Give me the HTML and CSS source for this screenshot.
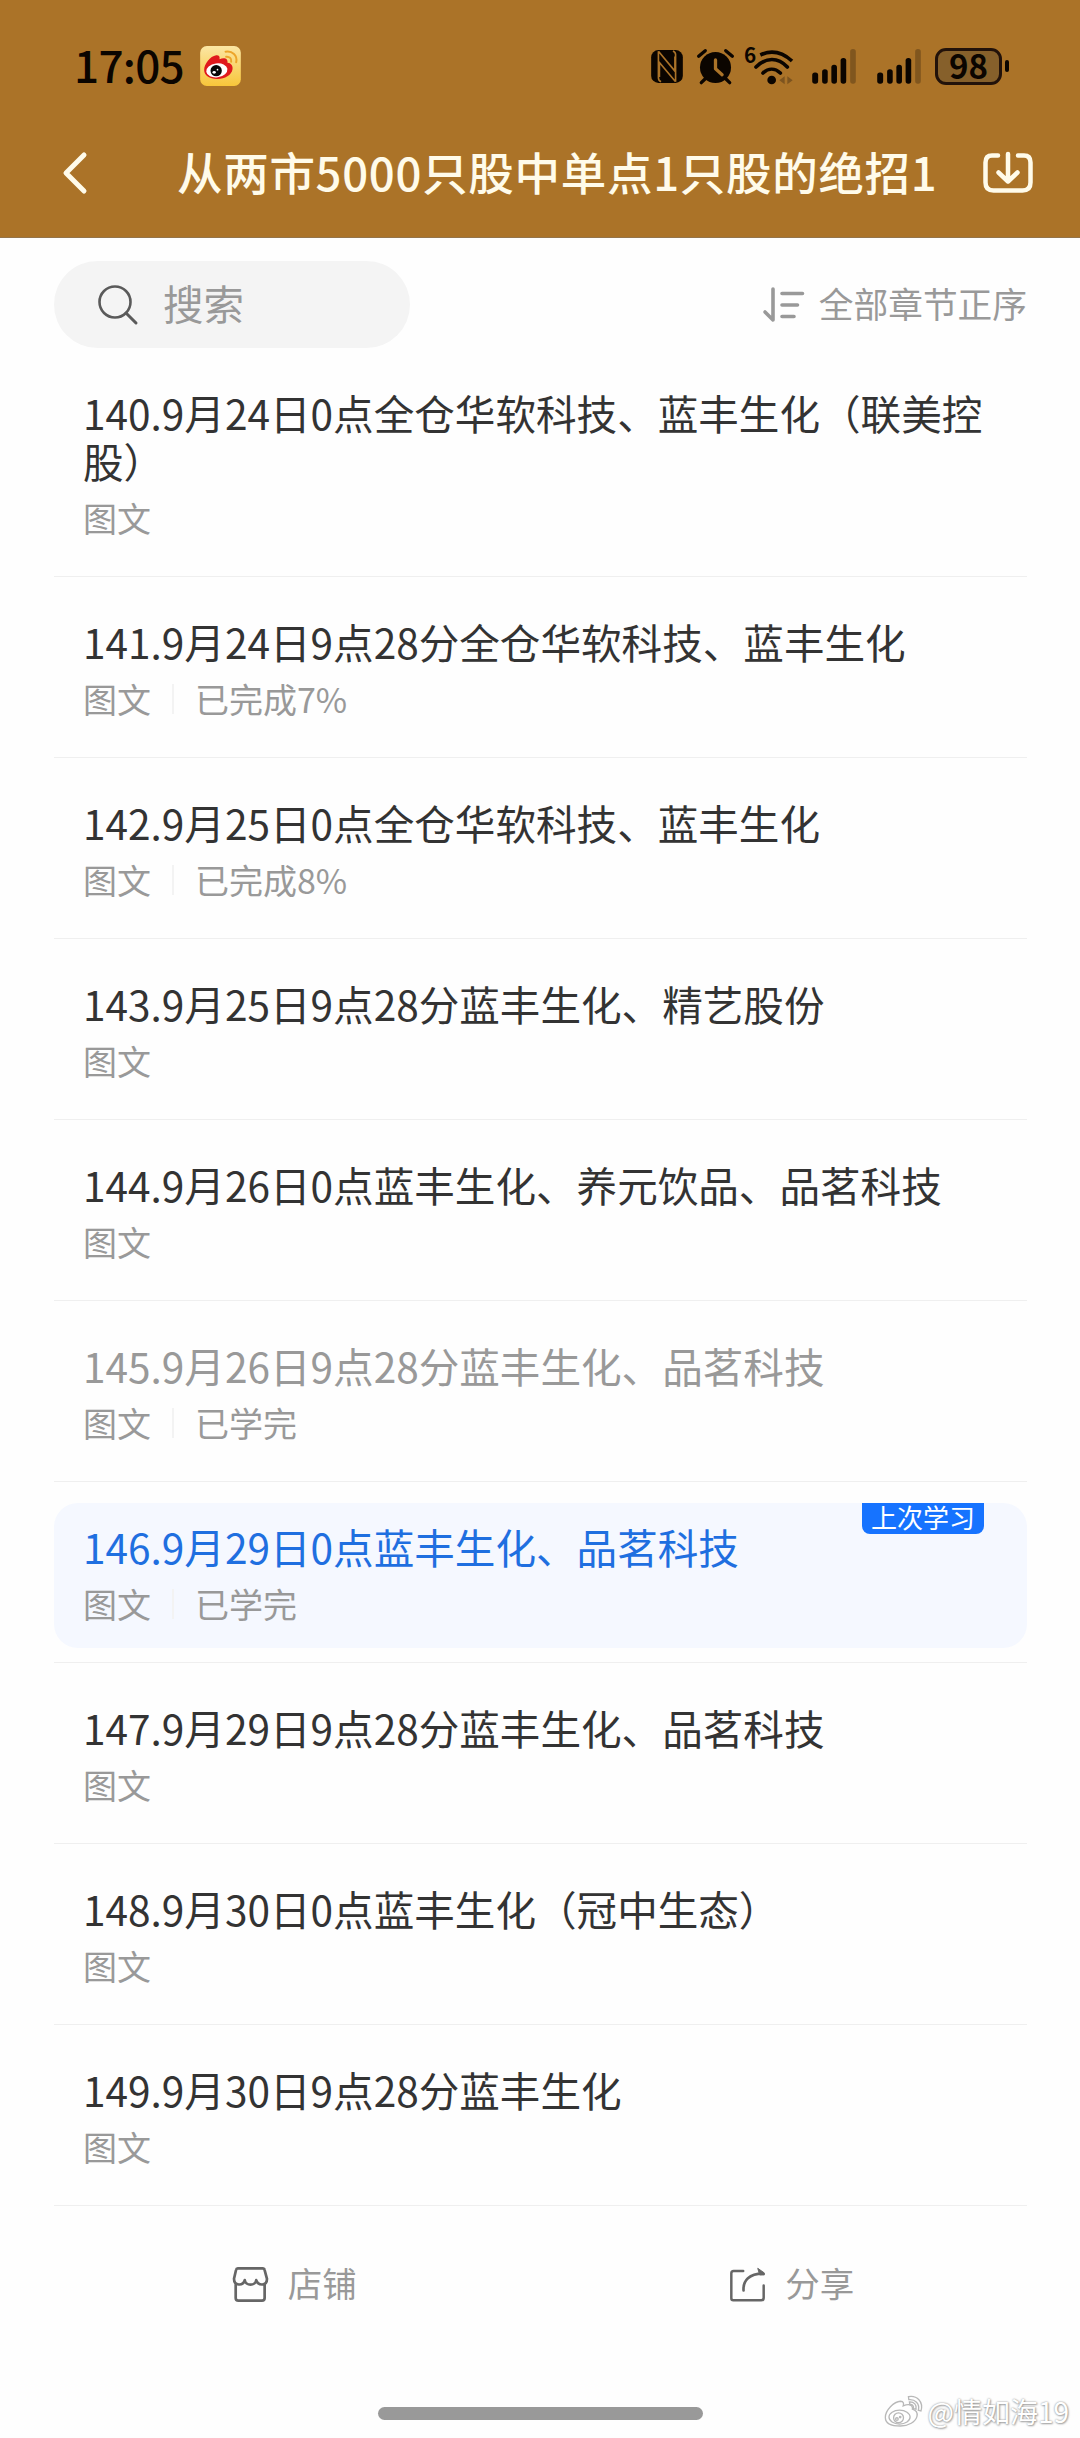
FILE: index.html
```html
<!DOCTYPE html>
<html lang="zh-CN">

<head>
    <meta charset="UTF-8">
    <title>从两市5000只股中单点1只股的绝招1</title>
    <link rel="stylesheet" href="styles.css">
</head>

<body>
    <header class="header">
        <div class="status-bar">
            <span class="time">17:05</span>
            <svg class="weibo-app" viewBox="0 0 122 120">
                <defs>
                    <linearGradient id="appBg" x1="0" y1="0" x2="0" y2="1">
                        <stop offset="0" stop-color="#fbe6a4"/>
                        <stop offset="1" stop-color="#f8c63a"/>
                    </linearGradient>
                </defs>
                <rect width="122" height="120" rx="20" fill="url(#appBg)"/>
                <path d="M12 72C12 54 30 31 48 28c8-1 12 4 10 12 12-6 26-4 24 10 10 1 17 8 15 20-3 19-25 30-47 29C28 98 12 89 12 72z" fill="#e0191d"/>
                <ellipse cx="50" cy="73" rx="32" ry="21" fill="#fff" transform="rotate(-8 50 73)"/>
                <circle cx="48" cy="74" r="17" fill="#080808"/>
                <ellipse cx="42" cy="79" rx="5" ry="4" fill="#fff"/>
                <circle cx="52" cy="71" r="2.5" fill="#fff"/>
                <path d="M76 17c20-4 37 12 32 32M78 32c10-1 17 6 15 15" fill="none" stroke="#eda52a" stroke-width="6" stroke-linecap="round"/>
            </svg>
            <div class="status-icons">
                <svg class="nfc" viewBox="0 0 96 100">
                    <rect width="96" height="100" rx="22" fill="#0b0500"/>
                    <path d="M22 4v80c0 6 3 10 8 12M22 4l50 60V20M74 96V14c0-6-3-9-8-11M74 96L25 38v44" fill="none" stroke="#ab7328" stroke-width="5"/>
                </svg>
                <svg class="alarm" viewBox="0 0 110 106">
                    <circle cx="55" cy="56" r="47" fill="#0b0500"/>
                    <path d="M4 22L24 5M106 22L86 5M24 90l-12 12M86 90l12 12" stroke="#0b0500" stroke-width="10" stroke-linecap="round"/>
                    <path d="M55 33v27l20 18" fill="none" stroke="#ab7328" stroke-width="10" stroke-linecap="round" stroke-linejoin="round"/>
                </svg>
                <svg class="wifi" viewBox="0 0 144 114">
                    <text class="wifi-num" x="-3" y="48">6</text>
                    <g fill="none" stroke="#0b0500" stroke-width="11">
                        <path d="M46 24C80 8 112 16 141 42"/>
                        <path d="M33 60c30-30 66-30 94 0" stroke-linecap="round"/>
                        <path d="M54 78c16-15 36-15 52 0" stroke-linecap="round"/>
                    </g>
                    <circle cx="80" cy="99" r="13" fill="#0b0500"/>
                    <path d="M119 88v24l-16-12zM127 88v24l16-12z" fill="#7d541f"/>
                </svg>
                <svg class="signal" viewBox="0 0 132 106">
                    <g fill="#0b0500">
                        <rect x="0" y="71" width="18" height="34" rx="8"/>
                        <rect x="30" y="61" width="17" height="44" rx="8"/>
                        <rect x="58" y="48" width="17" height="57" rx="8"/>
                        <rect x="86" y="27" width="17" height="78" rx="8"/>
                    </g>
                    <rect x="115" y="0" width="17" height="105" rx="8" fill="#80561e"/>
                </svg>
                <svg class="signal" viewBox="0 0 132 106">
                    <g fill="#0b0500">
                        <rect x="0" y="71" width="18" height="34" rx="8"/>
                        <rect x="30" y="61" width="17" height="44" rx="8"/>
                        <rect x="58" y="48" width="17" height="57" rx="8"/>
                        <rect x="86" y="27" width="17" height="78" rx="8"/>
                    </g>
                    <rect x="115" y="0" width="17" height="105" rx="8" fill="#80561e"/>
                </svg>
                <div class="battery">
                    <span class="level">98</span>
                    <span class="cap"></span>
                </div>
            </div>
        </div>
        <div class="title-bar">
            <svg class="back" viewBox="0 0 24 42">
                <path d="M21 3L3 21l18 18" fill="none" stroke="#fffbea" stroke-width="5" stroke-linecap="round" stroke-linejoin="round"/>
            </svg>
            <h1 class="title">从两市5000只股中单点1只股的绝招1</h1>
            <svg class="download" viewBox="0 0 50 42">
                <path d="M15 3.500h-6q-6.500 0-6.500 7v20q0 8 8 8h29q8 0 8-8v-20q0-7-6.500-7h-6M25 2v27M15.500 20.500l9.500 9 9.500-9" fill="none" stroke="#fffbea" stroke-width="4.500" stroke-linecap="round" stroke-linejoin="round"/>
            </svg>
        </div>
    </header>

    <div class="toolbar">
        <div class="search">
            <svg class="search-icon" viewBox="0 0 40 40">
                <circle cx="17" cy="17" r="15.500" fill="none" stroke="#5a5a5a" stroke-width="2.600"/>
                <path d="M28 28l10 10" stroke="#5a5a5a" stroke-width="3" stroke-linecap="round"/>
            </svg>
            <span class="label">搜索</span>
        </div>
        <div class="sort">
            <svg class="sort-icon" viewBox="0 0 42 36">
                <path d="M10 2v31L2 25M19 6.500h20.500M19 18h15.500M19 29.500h12" fill="none" stroke="#999" stroke-width="3.600" stroke-linecap="round" stroke-linejoin="round"/>
            </svg>
            <span class="label">全部章节正序</span>
        </div>
    </div>

    <ul class="list">
        <li class="item">
            <div class="chapter">
                <div class="name">140.9月24日0点全仓华软科技、蓝丰生化（联美控股）</div>
                <div class="meta"><span>图文</span></div>
            </div>
        </li>
        <li class="item">
            <div class="chapter">
                <div class="name">141.9月24日9点28分全仓华软科技、蓝丰生化</div>
                <div class="meta"><span>图文</span><span class="progress">已完成7%</span></div>
            </div>
        </li>
        <li class="item">
            <div class="chapter">
                <div class="name">142.9月25日0点全仓华软科技、蓝丰生化</div>
                <div class="meta"><span>图文</span><span class="progress">已完成8%</span></div>
            </div>
        </li>
        <li class="item">
            <div class="chapter">
                <div class="name">143.9月25日9点28分蓝丰生化、精艺股份</div>
                <div class="meta"><span>图文</span></div>
            </div>
        </li>
        <li class="item">
            <div class="chapter">
                <div class="name">144.9月26日0点蓝丰生化、养元饮品、品茗科技</div>
                <div class="meta"><span>图文</span></div>
            </div>
        </li>
        <li class="item">
            <div class="chapter done">
                <div class="name">145.9月26日9点28分蓝丰生化、品茗科技</div>
                <div class="meta"><span>图文</span><span class="progress">已学完</span></div>
            </div>
        </li>
        <li class="item">
            <div class="chapter current">
                <div class="name">146.9月29日0点蓝丰生化、品茗科技</div>
                <div class="meta"><span>图文</span><span class="progress">已学完</span></div>
                <span class="badge">上次学习</span>
            </div>
        </li>
        <li class="item">
            <div class="chapter">
                <div class="name">147.9月29日9点28分蓝丰生化、品茗科技</div>
                <div class="meta"><span>图文</span></div>
            </div>
        </li>
        <li class="item">
            <div class="chapter">
                <div class="name">148.9月30日0点蓝丰生化（冠中生态）</div>
                <div class="meta"><span>图文</span></div>
            </div>
        </li>
        <li class="item">
            <div class="chapter">
                <div class="name">149.9月30日9点28分蓝丰生化</div>
                <div class="meta"><span>图文</span></div>
            </div>
        </li>
    </ul>

    <footer class="footer">
        <div class="action">
            <svg class="action-icon" viewBox="0 0 104 104">
                <path d="M14 4h74q5 0 6 5l7 26c0 22-26 22-32 4-2 18-32 18-34 0-5 18-32 18-32-4L9 9q1-5 5-5zM8 48v44q0 8 8 8h70q8 0 8-8V48" fill="none" stroke="#666" stroke-width="8" stroke-linejoin="round"/>
            </svg>
            <span class="label">店铺</span>
        </div>
        <div class="action">
            <svg class="action-icon" viewBox="0 0 106 104">
                <path d="M40 11H11q-7 0-7 7v76q0 6 6 6h84q8 0 8-8V55" fill="none" stroke="#666" stroke-width="7.500" stroke-linecap="round"/>
                <path d="M41 70c-2-30 18-51 58-51" fill="none" stroke="#666" stroke-width="8" stroke-linecap="round"/>
                <path d="M84 3l20 14v6H90z" fill="#666" stroke="#666" stroke-width="3" stroke-linejoin="round"/>
            </svg>
            <span class="label">分享</span>
        </div>
    </footer>

    <div class="home-bar"></div>

    <div class="watermark">
        <svg class="watermark-icon" viewBox="0 0 118 100">
            <g fill="#fff" stroke="#b8b8b8" stroke-width="4">
                <path d="M4 68C4 46 30 20 50 19c10 0 10 8 8 14 14-6 30-6 28 10 10 3 16 10 14 21-4 18-26 30-50 30C24 94 4 86 4 68z"/>
                <ellipse cx="47" cy="67" rx="32" ry="21"/>
                <circle cx="44" cy="69" r="15"/>
                <circle cx="39" cy="73" r="4"/>
                <circle cx="49" cy="67" r="2"/>
                <path d="M74 5c26-5 46 16 38 43l-8-2c5-20-10-34-29-32zM77 21c14-1 23 9 20 22l-8-2c2-8-3-13-11-12z"/>
            </g>
        </svg>
        <span>@情如海19</span>
    </div>
</body>

</html>
```
FILE: styles.css
```css
* {
    box-sizing: border-box;
}

body {
    margin: 0;
    width: 1080px;
    height: 2438px;
    position: relative;
    overflow: hidden;
    background-color: #fefefe;
    font-family: "Noto Sans CJK SC", sans-serif;
    color: #333;
}

svg {
    display: block;
    flex-shrink: 0;
    overflow: visible;
}

.header {
    height: 238px;
    background-color: #ab7328;
    border-bottom: 1px solid #94744a;
}

.status-bar {
    display: flex;
    align-items: center;
    height: 108px;
    padding: 24px 71px 0 74px;
    color: #0b0500;
}

.time {
    width: 126px;
    padding-bottom: 5px;
    font-size: 44px;
    font-weight: 500;
    line-height: 60px;
    letter-spacing: -0.7px;
    white-space: nowrap;
}

.weibo-app {
    width: 41px;
    height: 40px;
}

.status-icons {
    display: flex;
    align-items: center;
    margin-left: auto;
}

.nfc {
    width: 32px;
    height: 33px;
    margin-right: 14px;
}

.alarm {
    width: 37px;
    height: 35px;
    margin-right: 11px;
}

.wifi {
    width: 48px;
    height: 38px;
    margin-right: 19px;
}

.wifi-num {
    font-size: 62px;
    font-weight: 700;
    fill: #0b0500;
}

.signal {
    width: 44px;
    height: 35px;
    margin-right: 21px;
}

.battery {
    display: flex;
    align-items: center;
    gap: 3px;
    margin-left: -7px;
}

.level {
    width: 67px;
    height: 37px;
    border: 3px solid #22120a;
    border-radius: 11px;
    background-color: #86602b;
    font-size: 33px;
    font-weight: 700;
    line-height: 29px;
    text-align: center;
}

.cap {
    width: 4px;
    height: 12px;
    border-radius: 2px;
    background-color: #0b0500;
}

.title-bar {
    display: flex;
    align-items: center;
    height: 130px;
    padding: 0 47px 0 63px;
    color: #fffbea;
}

.back {
    width: 24px;
    height: 42px;
}

.title {
    margin: 0 0 0 90px;
    padding-bottom: 5px;
    font-size: 45.5px;
    font-weight: 500;
    line-height: 60px;
    letter-spacing: 0.7px;
    white-space: nowrap;
}

.download {
    width: 50px;
    height: 42px;
    margin-left: auto;
}

.toolbar {
    display: flex;
    justify-content: space-between;
    align-items: center;
    padding: 23px 53px 0 54px;
    color: #999;
}

.label {
    padding-bottom: 4px;
}

.search {
    display: flex;
    align-items: center;
    gap: 25px;
    width: 356px;
    height: 87px;
    padding-left: 44px;
    border-radius: 44px;
    background-color: #f4f4f4;
    font-size: 40.5px;
}

.search-icon {
    width: 40px;
    height: 40px;
}

.sort {
    display: flex;
    align-items: center;
    gap: 14px;
    font-size: 34.7px;
}

.sort-icon {
    width: 42px;
    height: 36px;
}

.list {
    list-style: none;
    margin: 0;
    padding: 0 53px 0 54px;
}

.item {
    padding: 21px 0 14px;
    border-bottom: 1px solid #efefef;
}

.chapter {
    position: relative;
    min-height: 145px;
    padding: 20px 30px 22px 29px;
    border-radius: 24px;
}

.name {
    font-size: 40.6px;
    line-height: 48px;
}

.meta {
    display: flex;
    align-items: center;
    margin-top: 10px;
    font-size: 34px;
    line-height: 45px;
    color: #999;
}

.progress {
    display: flex;
    align-items: center;
}

.progress::before {
    content: "";
    width: 2px;
    height: 30px;
    margin: 0 21px;
    background-color: #f3f3f3;
}

.done .name {
    color: #999;
}

.current {
    background-color: #f5f8ff;
}

.current .name {
    color: #1f6fe0;
}

.badge {
    position: absolute;
    top: 0;
    right: 43px;
    width: 122px;
    height: 31px;
    border-radius: 0 0 8px 8px;
    background-color: #1673ff;
    color: #fff;
    font-size: 26px;
    line-height: 28px;
    text-align: center;
}

.footer {
    display: flex;
    height: 156px;
    padding: 0 39px 0 46px;
    font-size: 34.5px;
    color: #999;
}

.action {
    flex: 1;
    display: flex;
    justify-content: center;
    align-items: center;
    gap: 20px;
}

.action-icon {
    width: 35px;
    height: 35px;
}

.home-bar {
    width: 325px;
    height: 13px;
    margin: 45px auto 0;
    border-radius: 7px;
    background-color: #999;
}

.watermark {
    position: absolute;
    right: 11px;
    bottom: 9px;
    display: flex;
    align-items: center;
    gap: 4px;
    color: #fff;
    font-size: 28px;
    line-height: 36px;
    text-shadow: 0 0 2px #888, 1px 1px 2px #aaa;
}

.watermark-icon {
    width: 39px;
    height: 33px;
}
```
